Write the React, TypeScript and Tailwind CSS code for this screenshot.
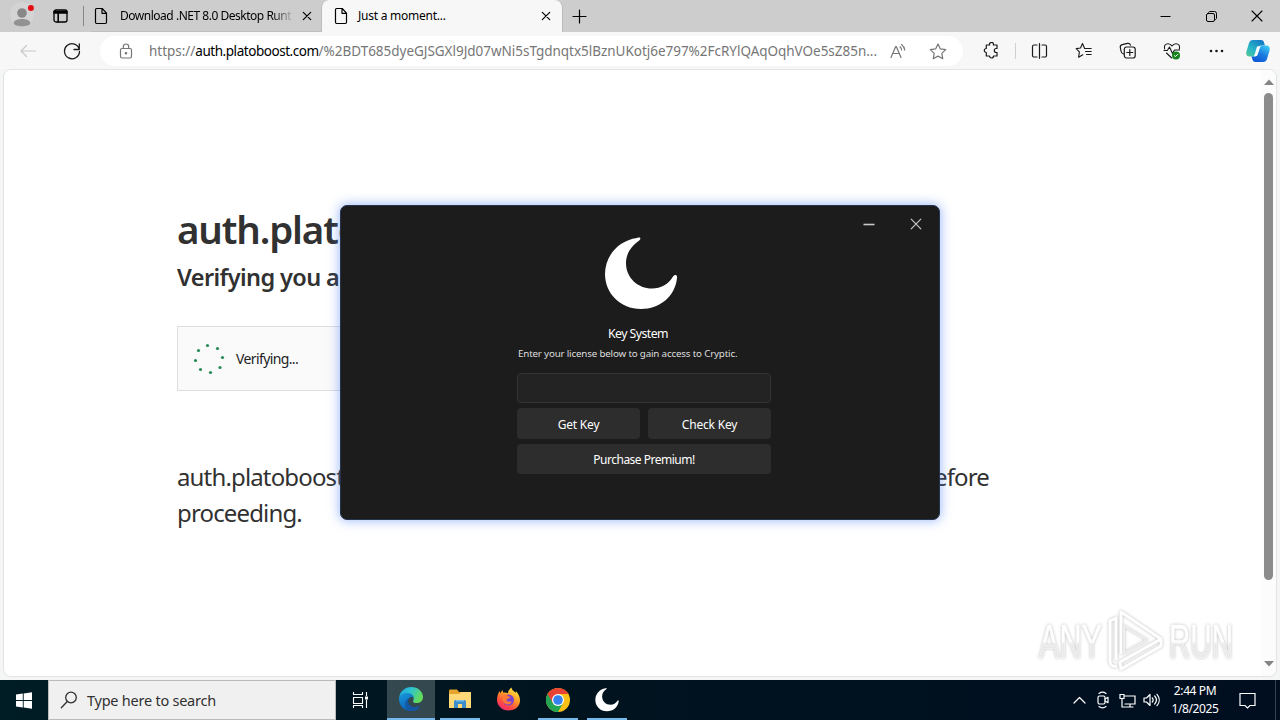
import type { ReactNode } from 'react';

type IconProps = { w: number; h?: number; vb?: string; className?: string; sw?: number; children: ReactNode };

function Icon({ w, h = w, vb, className = '', sw = 1.2, children }: IconProps) {
  return (
    <svg width={w} height={h} viewBox={vb ?? `0 0 ${w} ${h}`} fill="none" stroke="currentColor" strokeWidth={sw} strokeLinecap="round" strokeLinejoin="round" className={`block shrink-0 ${className}`}>
      {children}
    </svg>
  );
}

function Cell({ className, children }: { className: string; children?: ReactNode }) {
  return <div className={`flex shrink-0 items-center justify-center ${className}`}>{children}</div>;
}

const PageIcon = () => (
  <Icon w={14} h={18} sw={1.2}>
    <path d="M2.500 1.500h5.700l4.300 4.600v9.200a1.200 1.200 0 0 1-1.200 1.200H2.700a1.200 1.200 0 0 1-1.200-1.200V2.700a1.200 1.200 0 0 1 1.200-1.200zM8 1.700v4.600h4.300" />
  </Icon>
);

const CloseIcon = () => (
  <Icon w={10} sw={1.2}><path d="M1.300 1.300l7.400 7.400M8.700 1.300L1.300 8.700" /></Icon>
);

const Moon = ({ size }: { size: number }) => (
  <Icon w={size} vb="0 0 74 74" sw={0} className="text-white">
    <path fill="currentColor" d="M33 1C36-.2 37.500 1.200 35.500 3.200C27 9 22 17 22 26C22 41 34 51.500 48 51.500C57 51.500 64 47.500 68.700 40C71 36.700 73.500 37.800 73 41C71 59.500 56 72 37 72C16.500 72 1 56.500 1 37C1 19.500 14 3.500 33 1Z" />
  </Icon>
);

function TabStrip() {
  return (
    <div className="flex h-8 shrink-0 bg-[#cdcdcd] text-black">
      <Cell className="w-11">
        <Icon w={26} h={28} sw={0}>
          <circle cx="13" cy="12" r="12" fill="#fff" opacity=".14" />
          <circle cx="13" cy="11" r="4.800" fill="#888" />
          <path d="M4.800 21c0-5.300 16.400-5.300 16.400 0 0 4.300-16.400 4.300-16.400 0z" fill="#929292" />
          <circle cx="21.900" cy="6" r="3" fill="#e60b12" />
        </Icon>
      </Cell>
      <Cell className="w-8">
        <Icon w={15} h={14} sw={1.3}>
          <rect x="1" y="1" width="13" height="12" rx="2" />
          <path d="M1 2.500h13M1 4h13M5.200 4v9" strokeWidth="1.600" />
        </Icon>
      </Cell>
      <Cell className="w-[15px]"><div className="h-5 w-px bg-[#868686]" /></Cell>
      <div className="flex w-[230px] shrink-0 items-center border-b border-[#c0c0c0]">
        <Cell className="w-5"><PageIcon /></Cell>
        <div className="ml-[9px] w-[174px] overflow-hidden whitespace-nowrap bg-linear-to-r from-black from-85% to-[#cdcdcd] to-100% bg-clip-text font-[Noto_Sans,sans-serif] text-[12px] tracking-[-0.48px] text-transparent">
          Download .NET 8.0 Desktop Runt
        </div>
        <Cell className="ml-[3px] w-5"><CloseIcon /></Cell>
      </div>
      <div className="flex w-[242px] shrink-0 items-center rounded-t-lg border-x border-[#bcbcbc] bg-[#f7f7f7]">
        <Cell className="ml-[9px] w-5"><PageIcon /></Cell>
        <div className="ml-[7px] w-[180px] whitespace-nowrap font-[Noto_Sans,sans-serif] text-[12px] tracking-[-0.25px]">Just a moment...</div>
        <Cell className="w-4"><CloseIcon /></Cell>
      </div>
      <Cell className="w-8"><Icon w={15}><path d="M7.500 1v13M1 7.500h13" /></Icon></Cell>
      <div className="ml-auto flex">
        <Cell className="w-[46px]"><Icon w={11} sw={1}><path d="M.5 5.500h10" strokeLinecap="butt" /></Icon></Cell>
        <Cell className="w-[46px]">
          <Icon w={11} sw={1}><rect x=".5" y="2.500" width="8" height="8" rx="1.500" /><path d="M2.500 1.500c.4-.7.8-1 1.500-1h4.500a2 2 0 0 1 2 2V7c0 .7-.3 1.200-1 1.500" /></Icon>
        </Cell>
        <Cell className="w-[46px]"><Icon w={12} sw={1.1}><path d="M1 1l10 10M11 1L1 11" /></Icon></Cell>
      </div>
    </div>
  );
}

function Toolbar() {
  return (
    <div className="flex h-[37px] shrink-0 items-center bg-[#f7f7f7] text-[#1a1a1a]">
      <Cell className="w-14"><Icon w={18} h={14} className="text-[#c8c8c8]"><path d="M16.500 7H2M7.500 1.500L2 7l5.500 5.500" /></Icon></Cell>
      <Cell className="mr-3 w-8">
        <Icon w={18} h={18} sw={1.3}><path d="M16.300 7.500A7.500 7.500 0 1 0 16.500 9.500M16.300 2v5.500H11" /></Icon>
      </Cell>
      <div className="mt-px flex h-[30px] w-[863px] shrink-0 items-center rounded-full bg-white text-[#767676]">
        <Cell className="ml-4 w-5">
          <Icon w={14} h={16}><rect x="1.500" y="5.500" width="11" height="9.500" rx="1.500" /><path d="M4.300 5.500V3.700a2.700 2.700 0 0 1 5.400 0v1.800" /><circle cx="7" cy="10.300" r=".7" fill="currentColor" /></Icon>
        </Cell>
        <div className="ml-[13px] w-[735px] whitespace-nowrap font-[Noto_Sans,sans-serif] text-[13.500px] tracking-[-0.025px]">
          https://<span className="tracking-[-0.46px] text-black">auth.platoboost.com</span>/%2BDT685dyeGJSGXl9Jd07wNi5sTgdnqtx5lBznUKotj6e797%2FcRYlQAqOqhVOe5sZ85n...
        </div>
        <Cell className="w-7">
          <Icon w={18} h={16}><path d="M2 14.500L6.700 3.500h.6L12 14.500M3.800 10.500h6.400M11 3.800c1 .8 1.500 1.900 1.600 3.200M12.500 1.500c2 1.500 3 3.300 3.200 5.500" /></Icon>
        </Cell>
        <Cell className="ml-3 w-7">
          <Icon w={18} h={17}><path d="M9 1l2.350 4.900 5.350.7-3.900 3.750.95 5.350L9 13.100l-4.750 2.600.95-5.350L1.300 6.600l5.350-.7z" /></Icon>
        </Cell>
      </div>
      <Cell className="ml-3 w-8">
        <Icon w={16} h={17} sw={1.2}><path d="M4 3h2.600a2 2 0 1 1 3.800 0H14v3.500h-.7a2 2 0 1 0 0 4h.7V14h-3.500a2 2 0 1 1-4 0H3.300V10.500a2 2 0 1 1 0-4V3z" /></Icon>
      </Cell>
      <Cell className="w-4"><div className="h-4 w-px bg-[#d0d0d0]" /></Cell>
      <Cell className="w-8">
        <Icon w={17} h={16} sw={1.2}><path d="M6 2H3a1.500 1.500 0 0 0-1.500 1.500v9A1.500 1.500 0 0 0 3 14h3M11 2h3a1.500 1.500 0 0 1 1.500 1.500v9A1.500 1.500 0 0 1 14 14h-3M8.500.7v14.600" /></Icon>
      </Cell>
      <Cell className="ml-[13px] w-8">
        <Icon w={18} h={17} sw={1.1}><path d="M9.500 6.300L7.500 1.500 5.500 6l-4.300.6 3.200 3.200-.8 5.500 4.200-2.500M9.500 6.500h6.700M10.500 9.500h5.700M11.500 12.500h4.700" /></Icon>
      </Cell>
      <Cell className="ml-3 w-8">
        <Icon w={18} h={18} sw={1.2}><path d="M4.500 12C2.500 11.500 2.200 10.300 2 9L1.300 5.500C1 3.800 1.700 3 3.300 2.600l5-1.200c1.700-.4 2.700.2 3.200 1.700M7.500 5h6.500a2.200 2.200 0 0 1 2.200 2.200v6.600A2.200 2.200 0 0 1 14 16H7.500a2.200 2.200 0 0 1-2.200-2.200V7.200A2.200 2.200 0 0 1 7.500 5zM10.800 7.500v6M7.800 10.500h6" /></Icon>
      </Cell>
      <Cell className="ml-3 w-8">
        <Icon w={18} h={18} sw={1.1}><path d="M1.600 7C.8 3.500 2.500 1.700 5 1.700c1.800 0 3 .8 4 2.300 1-1.500 2.200-2.300 4-2.300 2.500 0 4.200 1.800 3.400 5.300M1 8.500h3.300L6.500 5l3 6.500 2-3.500h5M3.500 11l5.200 5" /><circle cx="13" cy="13.500" r="4" fill="#16821c" stroke="none" /><path d="M11.300 13.600l1.200 1 2.200-2.200" stroke="#fff" strokeWidth="1" /></Icon>
      </Cell>
      <Cell className="ml-3 w-8">
        <Icon w={15} h={4} sw={0}><circle cx="2" cy="2" r="1.300" fill="currentColor" /><circle cx="7.500" cy="2" r="1.300" fill="currentColor" /><circle cx="13" cy="2" r="1.300" fill="currentColor" /></Icon>
      </Cell>
      <Cell className="ml-3 w-7">
        <svg width="24" height="24" viewBox="0 0 24 24" className="block">
          <defs>
            <linearGradient id="cpA" x1="0" y1="1" x2=".8" y2="0"><stop offset="0" stopColor="#57c88e" /><stop offset=".4" stopColor="#2ab8c6" /><stop offset="1" stopColor="#1478c6" /></linearGradient>
            <linearGradient id="cpB" x1=".8" y1="0" x2=".2" y2="1"><stop offset="0" stopColor="#3bc9f4" /><stop offset=".5" stopColor="#1c79df" /><stop offset="1" stopColor="#0d56d5" /></linearGradient>
          </defs>
          <path d="M7 1h8c2 0 2.700 1 3.200 3l.7 2.500h-3c-1.800 0-2.700.7-3.300 2.500l-1.900 6C10 17 9 17.500 7 17.500H3.500C.5 17.500-.3 15 .6 12L3 4c.7-2 1.700-3 4-3z" fill="url(#cpA)" />
          <path d="M17 23H9.500c-2 0-2.700-1-3.200-3l-.8-2.500h3c1.800 0 2.700-.7 3.300-2.500L13.700 9c.6-2 1.600-2.500 3.600-2.500h3.200c3 0 3.800 2.500 2.900 5.500L21 20c-.7 2-1.700 3-4 3z" fill="url(#cpB)" />
          <path d="M12.500 7.200c-1 0-1.500.4-1.800 1.400L8.800 15c-.3 1-.7 1.700-1.300 2.200h1.700c1.500 0 2.100-.8 2.600-2.400l1.600-5.200c.3-1.200.8-2 1.500-2.400z" fill="#f7fcff" />
        </svg>
      </Cell>
    </div>
  );
}

const spinnerDots = [[14.500, 2.500], [24.500, 5.500], [29.500, 14.500], [27, 24.500], [17.500, 29.500], [7.500, 26.500], [2.500, 17.500], [5.500, 7.500]];

function Watermark() {
  return (
    <svg width="204" height="66" viewBox="0 0 204 66" className="block [filter:drop-shadow(0_0_1.500px_#bbb)]">
      <defs><linearGradient id="wm" x1="0" y1="0" x2="0" y2="1"><stop offset=".5" stopColor="#fff" /><stop offset=".55" stopColor="#e9e9e9" /></linearGradient></defs>
      <g fill="url(#wm)" fontFamily="Liberation Sans, sans-serif" fontWeight="400" fontSize="48" stroke="#fff" strokeWidth=".5">
        <text x="5" y="50" textLength="63" lengthAdjust="spacingAndGlyphs">ANY</text>
        <text x="135" y="50" textLength="64" lengthAdjust="spacingAndGlyphs">RUN</text>
      </g>
      <g fill="none" strokeWidth="3" stroke="#fff" strokeLinejoin="round">
        <path d="M82 52V10l-6 3v40c0 4 3 6 7 5" />
        <path d="M87 46V4l40 27-41 23 1 7 40-23v-6" />
        <path d="M90 18l23 14-23 13z" strokeWidth="2" stroke="#eee" />
      </g>
    </svg>
  );
}

function WebPage() {
  return (
    <div className="flex h-[611px] shrink-0 bg-[#f4f6f6] px-[3px] pb-[3px]">
      <div className="relative flex flex-1 rounded-lg border border-[#e4e4e4] bg-white">
        <div className="flex-1 pl-[173px] pt-[130px] font-[Noto_Sans,sans-serif] text-[#313131]">
          <div className="flex h-[60px] items-center whitespace-nowrap text-[38.500px] font-semibold tracking-[-1.15px]">auth.platoboost.com</div>
          <div className="mt-0.5 flex h-8 items-center whitespace-nowrap text-[23.500px] font-semibold tracking-[-0.6px]">Verifying you are human. This may take a few seconds.</div>
          <div className="mt-8 flex h-[65px] w-[300px] items-center border border-[#dedede] bg-[#fafafa] pl-[15px] text-[14px] tracking-[-0.62px] text-[#222]">
            <svg width="33" height="32" viewBox="0 0 33 32" fill="#2a8a57">
              {spinnerDots.map(([x, y], i) => <circle key={i} cx={x} cy={y} r="1.600" />)}
            </svg>
            <span className="ml-2.5">Verifying...</span>
          </div>
          <div className="mt-[68px] w-[930px] text-[24px] leading-9 tracking-[-0.85px]">
            <div className="flex w-[812px] justify-between whitespace-nowrap"><span>auth.platoboost.com needs to review the</span><span>connection before</span></div>
            <div>proceeding.</div>
          </div>
        </div>
        <div className="flex w-[15px] flex-col items-center rounded-r-lg bg-[#fcfcfc] pt-[9px]">
          <Icon w={10} h={6} sw={0}><path d="M0 6l5-5.500L10 6z" fill="#848484" /></Icon>
          <div className="mt-2 h-[487px] w-[9px] rounded-full bg-[#8b8b8b]" />
          <Icon w={10} h={6} sw={0} className="mt-[81px]"><path d="M0 0l5 5.500L10 0z" fill="#848484" /></Icon>
        </div>
        <div className="absolute left-[1030px] top-[538px]"><Watermark /></div>
      </div>
    </div>
  );
}

function KeyDialog() {
  const button = 'flex items-center justify-center rounded-[4px] bg-[#2d2d2d] text-[12px]';
  return (
    <div className="absolute left-[340px] top-[205px] flex h-[315px] w-[600px] flex-col rounded-[7px] border border-[#26344b] bg-[#1c1c1c] font-[Noto_Sans,sans-serif] text-white shadow-[0_0_11px_1px_rgba(70,125,245,0.500)]">
      <div className="flex h-[31px] shrink-0 justify-end pt-1 text-[#c8c8c8]">
        <Cell className="mr-[23px] w-6"><Icon w={14} sw={1.6}><path d="M1.500 7.500h11" strokeLinecap="butt" /></Icon></Cell>
        <Cell className="mr-[11px] w-6"><Icon w={12} sw={1.2}><path d="M1.200 1.200l9.600 9.600M10.800 1.200L1.200 10.800" /></Icon></Cell>
      </div>
      <div className="ml-[263px] h-[74px]"><Moon size={74} /></div>
      <div className="ml-[267px] mt-[13px] flex h-5 items-center whitespace-nowrap text-[12.300px] tracking-[-0.55px]">Key System</div>
      <div className="ml-[177px] mt-0.5 flex h-4 items-center whitespace-nowrap text-[9.800px] tracking-[-0.18px] text-[#dedede]">Enter your license below to gain access to Cryptic.</div>
      <div className="ml-[176px] mt-[11px] flex w-[254px] flex-col">
        <div className="h-[30px] rounded-[4px] border border-[#343434] bg-[#232323]" />
        <div className="mt-[5px] grid h-[31px] grid-cols-2 gap-2 tracking-[-0.2px]"><div className={`pt-[3px] ${button}`}>Get Key</div><div className={`pt-[3px] ${button}`}>Check Key</div></div>
        <div className={`mt-[5px] h-[30px] pt-px tracking-[-0.500px] ${button}`}>Purchase Premium!</div>
      </div>
    </div>
  );
}

function Taskbar() {
  return (
    <div className="flex h-10 shrink-0 bg-linear-to-r from-[#001c24] via-[#00131f] to-[#000e20] font-[Noto_Sans,sans-serif] text-white">
      <Cell className="w-12"><Icon w={16} h={17} sw={0}><path fill="currentColor" d="M0 2.500L6.800 1.500V8H0zM7.700 1.400L16 .2V8H7.700zM0 9h6.800v6.500L0 14.600zM7.700 9H16v7.800l-8.300-1.200z" /></Icon></Cell>
      <div className="flex w-72 items-center border border-[#bababa] bg-[#f0f0f0] text-[#303030]">
        <Cell className="ml-2 w-6"><Icon w={18} sw={1.3}><circle cx="11" cy="6.500" r="5.300" /><path d="M7.300 10.500L1.300 16.700" /></Icon></Cell>
        <div className="ml-1.5 mt-0.5 whitespace-nowrap text-[14.500px] tracking-[-0.24px]">Type here to search</div>
      </div>
      <Cell className="mr-[3px] w-12"><Icon w={17} h={16} sw={1.1}><path strokeLinecap="butt" d="M1.500 0v2.500h9V0M1.500 5.500h9v6h-9zM1.500 16v-2.500h9V16M14.500 0v4M14.500 8v8" /><path d="M13 4.500h3v3h-3z" fill="currentColor" stroke="none" /></Icon></Cell>
      <div className="relative flex w-12 items-center justify-center border-b-2 border-[#76b9ed] bg-[#34484f]">
        <svg width="26" height="26" viewBox="0 0 26 26">
          <defs>
            <linearGradient id="edA" x1="0" y1="0" x2="1" y2=".4"><stop offset="0" stopColor="#1b9de1" /><stop offset=".5" stopColor="#2fc4cf" /><stop offset="1" stopColor="#63dc5c" /></linearGradient>
            <linearGradient id="edB" x1="0" y1="0" x2=".5" y2="1"><stop offset="0" stopColor="#189adc" /><stop offset="1" stopColor="#0b5db5" /></linearGradient>
          </defs>
          <path d="M1 12C2 5 7 1 13 1c7.500 0 12 5 12 10 0 4-3 6-6.500 6-2.500 0-4-.9-3.300-2.300C17 11 14 7.500 9.500 7.500 5 7.500 2 10 1 12z" fill="url(#edA)" />
          <path d="M1 13c0-3.500 3.500-6 8-6 4 0 6.500 2 6.800 5-2-2-6-.8-6 3.500 0 4.500 5 8.500 9.700 6.300C17.500 24 15.500 25 13 25 6 25 1 19.500 1 13z" fill="url(#edB)" />
          <path d="M10.500 12.500c-2.200 5 3.700 10.800 9.500 8 .9-.5 2.400-.3 1.700.7-2.200 3-5.400 4-8.700 3.800-6-.8-8.500-9-2.500-12.500z" fill="#1458a4" />
        </svg>
      </div>
      <div className="ml-[5px] flex w-10 items-center justify-center border-b-2 border-[#76b9ed]">
        <svg width="22" height="20" viewBox="0 0 22 20"><path d="M0 2c0-1 .5-1.500 1.500-1.500H8L10 3h11.500v16H0z" fill="#e3a52b" /><path d="M0 5h10l2-2h10v16H0z" fill="#ffd978" /><path d="M5 19v-6c0-1.500.8-2 2-2h8c1.200 0 2 .5 2 2v6h-4v-4H9v4z" fill="#3b8dcc" /><path d="M7 11h8v1.500H7z" fill="#76bfe9" /></svg>
      </div>
      <Cell className="ml-2 mr-px w-10 pb-0.5">
        <svg width="25" height="25" viewBox="0 0 25 25">
          <defs><linearGradient id="ff" x1=".8" y1="0" x2=".2" y2="1"><stop offset="0" stopColor="#fff245" /><stop offset=".4" stopColor="#ff9d27" /><stop offset=".75" stopColor="#ff4545" /><stop offset="1" stopColor="#eb2780" /></linearGradient></defs>
          <path d="M3.500 4l.7 2.200L6.500 3l.8 2.800c1.500-.4 3.200-.2 4.700.4C12 3.800 13.500 2 15.500.5c.3 2.700 2.300 3.500 4 5.300l.5-1.500c3.300 3 4 7 4 9.200 0 6-5 10-11.500 10S1 18.500 1 13C1 9.500 2 6.500 3.500 4z" fill="url(#ff)" />
          <circle cx="12.500" cy="13" r="5.500" fill="#7942cf" /><path d="M6.500 8c2-1 4.500-.5 5.500 1.200 1 .2 2 .2 2.500.6-.5 2-3.500 1.500-4 3 0 1.600 1.500 2.300 3 1.800 1.200-.4 2.200 0 2 .8-2.500 3.600-8 2-9-2.400z" fill="#ff7a35" />
        </svg>
      </Cell>
      <div className="ml-[9px] flex w-10 items-center justify-center border-b-2 border-[#76b9ed] pt-0.5">
        <svg width="24" height="24" viewBox="0 0 24 24"><circle cx="12" cy="12" r="12" fill="#fbc116" /><path d="M1.600 6A12 12 0 0 0 12 24l5.200-9L12 12z" fill="#23a455" /><path d="M12 0a12 12 0 0 1 10.400 6H12l-5.200 9L1.600 6A12 12 0 0 1 12 0z" fill="#ea4335" /><circle cx="12" cy="12" r="6" fill="#fff" /><circle cx="12" cy="12" r="4.800" fill="#3581ed" /></svg>
      </div>
      <div className="ml-[9px] flex w-10 items-center justify-center border-b-2 border-[#76b9ed] pt-0.5"><Moon size={24} /></div>
      <div className="ml-auto flex">
        <Cell className="w-6"><Icon w={13} h={8}><path d="M1 7l5.500-5.500L12 7" /></Icon></Cell>
        <Cell className="w-6"><Icon w={14} h={18}><rect x="2" y="5" width="7" height="8" rx="1.500" /><path d="M9 8l3-1.700v5.400L9 10M3 2.500c2-1.500 5-1.500 7 0M3 15.500c2 1.500 5 1.500 7 0" /></Icon></Cell>
        <Cell className="w-6"><Icon w={17} h={15}><path strokeLinejoin="miter" d="M6 3h10v8H6M11 11v3M7 14h7M1 1.500h4v4H1zM3 5.500V14h3" /></Icon></Cell>
        <Cell className="w-6"><Icon w={17} h={14}><path d="M1 5h2.500L7 1.500v11L3.500 9H1zM9.300 5c1 1.200 1 2.800 0 4M11.700 3c2.200 2.500 2.200 5.500 0 8M14 1.300c3 3.500 3 8 0 11.400" /></Icon></Cell>
        <div className="flex w-16 flex-col items-center whitespace-nowrap text-[12px] leading-[18px] tracking-[-0.4px]"><span className="mt-0.5">2:44 PM</span><span>1/8/2025</span></div>
        <Cell className="w-10"><Icon w={17} h={17}><path strokeLinejoin="miter" d="M1 1.500h15v12h-5L8.500 16 6 13.500H1z" /></Icon></Cell>
        <div className="ml-2 mr-1 w-px bg-[#354453]" />
      </div>
    </div>
  );
}

export default function App() {
  return (
    <div className="relative flex h-[720px] w-[1280px] flex-col overflow-hidden">
      <TabStrip />
      <Toolbar />
      <WebPage />
      <Taskbar />
      <KeyDialog />
    </div>
  );
}
